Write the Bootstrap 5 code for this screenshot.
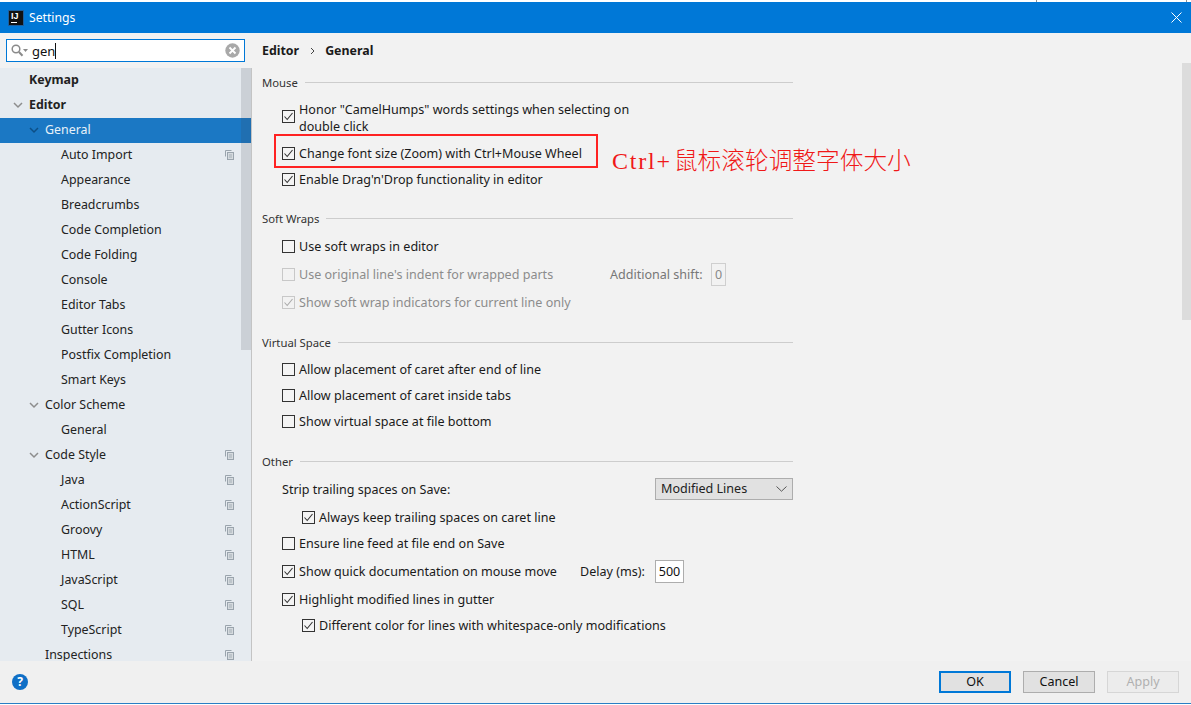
<!DOCTYPE html>
<html lang="en">
<head>
<meta charset="utf-8">
<title>Settings</title>
<link href="https://cdn.jsdelivr.net/npm/bootstrap@5.3.0/dist/css/bootstrap.min.css" rel="stylesheet">
<style>
html,body{height:705px;overflow:hidden;background:#fff}
body{font-family:"Noto Sans","Liberation Sans",sans-serif;font-size:12.55px;color:#1a1a1a;line-height:17px}
.dlg{height:705px;padding-bottom:1px}
.topstrip{height:2px;flex:none;background:linear-gradient(#8f8f8f,#8f8f8f) 1036px 0/1px 2px no-repeat,linear-gradient(#8f8f8f,#8f8f8f) 1186px 0/1px 2px no-repeat,#fff}
.titlebar{height:31px;background:#0078d7;color:#fff;padding:0 9px;flex:none;font-size:12.2px}
.ij-logo{width:14px;height:14px;background:#111;color:#fff;font:700 9px/10px "Liberation Sans",sans-serif;padding-left:2px;margin-right:6px;position:relative;flex:none;outline:1px solid #1f5f9c}
.ij-logo::after{content:"";position:absolute;left:2px;bottom:2px;width:6px;height:1px;background:#fff}
.workarea{flex:1 1 auto;min-height:0;overflow:hidden;background:#f2f2f2;position:relative}
.side{width:252px;flex:none;position:relative;overflow:hidden}
.searchwrap{height:35px;background:#f2f2f2;padding:6px 6px 0;flex:none}
.searchbox{width:239px;height:23px;background:#fff;border:1px solid #0078d7;padding:0 4px}
.searchbox input{border:0;outline:0;background:transparent;padding:0 0 0 4px;width:27px;font-size:13px;height:21px;color:#111}
.caret-mark{width:1px;height:16px;background:#111;flex:none}
.tree{list-style:none;margin:0;padding:0;flex:1 1 auto;background:#e6ebf0;border-right:1px solid #c4c4c4;font-size:12.4px}
.tnode{height:25px;display:flex;align-items:center;position:relative;white-space:nowrap;color:#222;padding-bottom:2px}
.lv0{padding-left:29px}.lv1{padding-left:45px}.lv2{padding-left:61px}
.tnode.sel{background:#1b78c4;color:#e8f1f8}
.chev{position:absolute;top:9px;width:10px;height:7px}
.lv0 .chev{left:13px}.lv1 .chev{left:29px}
.copyic{position:absolute;left:225px;top:7px;width:9px;height:10px}
.sidebar-thumb{position:absolute;left:241px;top:35px;width:10px;height:282px;background:rgba(60,70,80,.16)}
.main-pane{flex:1 1 auto;min-width:0;padding:8px 0 0 10px;overflow:hidden}
.crumbs{height:19px;font-weight:700;font-size:12.4px;margin-bottom:12px;display:flex;align-items:center}
.crumbs svg{margin:0 10px 0 11px}
.formcol{width:531px}
.sect{height:20px;display:flex;align-items:center;font-size:11.3px;color:#333;gap:7px}
.sect::after{content:"";flex:1 1 auto;height:1px;background:#cdcdcd}
.sect-gap{margin-top:18px}
.sect-gap.snug{margin-top:17px}
.ro{display:flex;align-items:center;height:24px;margin-top:2px;padding-left:20px;white-space:nowrap}
.ro.tall{margin-top:4px}
.ro.after-sect{margin-top:6px}
.ro.after-sect.near{margin-top:5px}
.ro.nest{padding-left:40px}
.ro.two{height:38px;margin-top:9px;align-items:flex-start;white-space:normal}
.ro.two .form-check-input{margin-top:9px}
.ro.dis{color:#8c8c8c}
.form-check-input.cb{appearance:none;width:13px;height:13px;flex:none;margin:0 4px 0 0;border:1px solid #333;border-radius:0;background-color:#f4f4f4;background-size:11px 11px;background-position:center;background-repeat:no-repeat}
.form-check-input.cb:checked{background-color:#f4f4f4;border-color:#333;background-image:url("data:image/svg+xml,%3Csvg xmlns='http://www.w3.org/2000/svg' viewBox='0 0 11 11'%3E%3Cpath d='M1.5 5.5 4.2 8.5 9.5 2' fill='none' stroke='%23333' stroke-width='1.1'/%3E%3C/svg%3E")}
.form-check-input.cb:focus{box-shadow:none}
.form-check-input.cb:disabled{opacity:1;border-color:#c8c8c8;background-color:#f2f2f2}
.form-check-input.cb:disabled:checked{border-color:#c8c8c8;background-color:#f2f2f2;background-image:url("data:image/svg+xml,%3Csvg xmlns='http://www.w3.org/2000/svg' viewBox='0 0 11 11'%3E%3Cpath d='M1.5 5.5 4.2 8.5 9.5 2' fill='none' stroke='%23aaa' stroke-width='1.1'/%3E%3C/svg%3E")}
.shift-lbl{margin-left:auto;flex:0 0 101px;color:#777}
.num-input.form-control{width:29px;height:23px;min-height:0;padding:0 2px;border:1px solid #adadad;border-radius:0;font-size:12.55px;text-align:center;background:#fff;color:#111;box-shadow:none;line-height:21px;flex:none}
.num-input.form-control:disabled{width:15px;padding:0;background:#f2f2f2;border-color:#cfcfcf;color:#888;opacity:1}
.num-input.shift-field{margin-right:67px}
.num-input.delay-field{margin-right:109px}
.delay-lbl{flex:0 0 75px}
.sel-box.form-select{width:138px;height:22px;padding:0 20px 0 5px;border:1px solid #adadad;border-radius:0;background-color:#e1e1e1;font-size:12.55px;line-height:20px;color:#222;box-shadow:none;background-position:right 5px center;background-size:11px 6px;background-image:url("data:image/svg+xml,%3Csvg xmlns='http://www.w3.org/2000/svg' viewBox='0 0 11 6'%3E%3Cpath d='M.5.5 5.5 5.2 10.500.5' fill='none' stroke='%23555'/%3E%3C/svg%3E")}
.wrap-honor{width:340px}
.redbox{position:absolute;left:274px;top:101px;width:324px;height:34px;border:2px solid #f22;pointer-events:none}
.note{position:absolute;left:612px;top:110px;color:#f01818;line-height:32px;white-space:nowrap;font-size:23.7px;font-family:"Noto Sans CJK SC",serif;font-weight:300}
.note .lat{font:24px/32px "Liberation Serif",serif;letter-spacing:1.8px;margin-right:2px}
.main-thumb{position:absolute;left:1182px;top:30px;width:9px;height:257px;background:#dcdcdc}
.foot{height:42px;background:#f0f0f0;padding:0 12px;flex:none}
.btmline{height:1px;background:#2a7fc4;flex:none}
.help{width:16px;height:16px;border-radius:50%;background:#0f6fc6;color:#fff;font-size:12px;font-weight:700;line-height:16px;text-align:center;margin-right:auto}
.btn.dlgbtn{width:72px;height:22px;padding:0;border-radius:0;background:#e1e1e1;border:1px solid #adadad;font-size:12.55px;line-height:20px;color:#111;margin-left:12px}
.btn.dlgbtn.pri{border:2px solid #0078d7;line-height:18px}
.btn.dlgbtn:disabled{background:#ececec;border-color:#d6d6d6;color:#b0b0b0;opacity:1}
</style>
</head>
<body>
<div class="dlg d-flex flex-column">
  <div class="topstrip"></div>
  <div class="titlebar d-flex align-items-center">
    <div class="ij-logo">IJ</div>
    <span>Settings</span>
    <svg class="ms-auto" width="11" height="11" viewBox="0 0 11 11"><path d="M.5.5 10.500 10.500M10.500.5.5 10.500" stroke="#fff" fill="none"/></svg>
  </div>
  <div class="workarea d-flex">
    <aside class="side d-flex flex-column">
      <div class="searchwrap">
        <div class="searchbox d-flex align-items-center">
          <svg width="17" height="13" viewBox="0 0 17 13" class="flex-none"><circle cx="5" cy="5" r="3.800" fill="none" stroke="#8a8a8a" stroke-width="1.500"/><path d="M8 8l3.500 3.800" stroke="#8a8a8a" stroke-width="2"/><path d="M12 5h5l-2.500 3z" fill="#8a8a8a"/></svg>
          <input type="text" value="gen" aria-label="Search"><span class="caret-mark"></span>
          <svg class="ms-auto" width="15" height="15" viewBox="0 0 15 15"><circle cx="7.500" cy="7.500" r="7.200" fill="#a9a9a9"/><path d="M4.500 4.500l6 6M10.500 4.500l-6 6" stroke="#fff" stroke-width="1.800"/></svg>
        </div>
      </div>
      <ul class="tree">
        <li class="tnode lv0 fw-bold">Keymap</li>
        <li class="tnode lv0 fw-bold"><svg class="chev" viewBox="0 0 10 7"><path d="M1 1l4 4 4-4" fill="none" stroke="#8d8d8d" stroke-width="1.500"/></svg>Editor</li>
        <li class="tnode lv1 sel"><svg class="chev" viewBox="0 0 10 7"><path d="M1 1l4 4 4-4" fill="none" stroke="#0d4f86" stroke-width="1.500"/></svg>General</li>
        <li class="tnode lv2">Auto Import<svg class="copyic" viewBox="0 0 9 10"><use href="#cpy"/></svg></li>
        <li class="tnode lv2">Appearance</li>
        <li class="tnode lv2">Breadcrumbs</li>
        <li class="tnode lv2">Code Completion</li>
        <li class="tnode lv2">Code Folding</li>
        <li class="tnode lv2">Console</li>
        <li class="tnode lv2">Editor Tabs</li>
        <li class="tnode lv2">Gutter Icons</li>
        <li class="tnode lv2">Postfix Completion</li>
        <li class="tnode lv2">Smart Keys</li>
        <li class="tnode lv1"><svg class="chev" viewBox="0 0 10 7"><path d="M1 1l4 4 4-4" fill="none" stroke="#8d8d8d" stroke-width="1.500"/></svg>Color Scheme</li>
        <li class="tnode lv2">General</li>
        <li class="tnode lv1"><svg class="chev" viewBox="0 0 10 7"><path d="M1 1l4 4 4-4" fill="none" stroke="#8d8d8d" stroke-width="1.500"/></svg>Code Style<svg class="copyic" viewBox="0 0 9 10"><use href="#cpy"/></svg></li>
        <li class="tnode lv2">Java<svg class="copyic" viewBox="0 0 9 10"><use href="#cpy"/></svg></li>
        <li class="tnode lv2">ActionScript<svg class="copyic" viewBox="0 0 9 10"><use href="#cpy"/></svg></li>
        <li class="tnode lv2">Groovy<svg class="copyic" viewBox="0 0 9 10"><use href="#cpy"/></svg></li>
        <li class="tnode lv2">HTML<svg class="copyic" viewBox="0 0 9 10"><use href="#cpy"/></svg></li>
        <li class="tnode lv2">JavaScript<svg class="copyic" viewBox="0 0 9 10"><use href="#cpy"/></svg></li>
        <li class="tnode lv2">SQL<svg class="copyic" viewBox="0 0 9 10"><use href="#cpy"/></svg></li>
        <li class="tnode lv2">TypeScript<svg class="copyic" viewBox="0 0 9 10"><use href="#cpy"/></svg></li>
        <li class="tnode lv1">Inspections<svg class="copyic" viewBox="0 0 9 10"><use href="#cpy"/></svg></li>
      </ul>
      <div class="sidebar-thumb"></div>
    </aside>
    <main class="main-pane">
      <div class="crumbs">Editor<svg width="5" height="8" viewBox="0 0 5 8"><path d="M1 1l3 3-3 3" fill="none" stroke="#444"/></svg>General</div>
      <div class="formcol">
        <div class="sect">Mouse</div>
        <label class="ro two"><input class="form-check-input cb" type="checkbox" checked><span class="wrap-honor">Honor "CamelHumps" words settings when selecting on double click</span></label>
        <label class="ro"><input class="form-check-input cb" type="checkbox" checked>Change font size (Zoom) with Ctrl+Mouse Wheel</label>
        <label class="ro"><input class="form-check-input cb" type="checkbox" checked>Enable Drag'n'Drop functionality in editor</label>
        <div class="sect sect-gap snug">Soft Wraps</div>
        <label class="ro after-sect"><input class="form-check-input cb" type="checkbox">Use soft wraps in editor</label>
        <div class="ro tall dis"><input class="form-check-input cb" type="checkbox" disabled>Use original line's indent for wrapped parts<span class="shift-lbl">Additional shift:</span><input class="form-control num-input shift-field" value="0" disabled aria-label="Additional shift"></div>
        <label class="ro tall dis"><input class="form-check-input cb" type="checkbox" checked disabled>Show soft wrap indicators for current line only</label>
        <div class="sect sect-gap">Virtual Space</div>
        <label class="ro after-sect near"><input class="form-check-input cb" type="checkbox">Allow placement of caret after end of line</label>
        <label class="ro"><input class="form-check-input cb" type="checkbox">Allow placement of caret inside tabs</label>
        <label class="ro"><input class="form-check-input cb" type="checkbox">Show virtual space at file bottom</label>
        <div class="sect sect-gap">Other</div>
        <div class="ro after-sect justify-content-between"><span>Strip trailing spaces on Save:</span><select class="form-select sel-box" aria-label="Strip trailing spaces"><option>Modified Lines</option></select></div>
        <label class="ro tall nest"><input class="form-check-input cb" type="checkbox" checked>Always keep trailing spaces on caret line</label>
        <label class="ro"><input class="form-check-input cb" type="checkbox">Ensure line feed at file end on Save</label>
        <div class="ro tall"><input class="form-check-input cb" type="checkbox" checked><span class="flex-grow-1">Show quick documentation on mouse move</span><span class="delay-lbl">Delay (ms):</span><input class="form-control num-input delay-field" value="500" aria-label="Delay"></div>
        <label class="ro tall"><input class="form-check-input cb" type="checkbox" checked>Highlight modified lines in gutter</label>
        <label class="ro nest"><input class="form-check-input cb" type="checkbox" checked>Different color for lines with whitespace-only modifications</label>
        <div class="sect sect-gap snug">Additional</div>
      </div>
    </main>
    <div class="main-thumb"></div>
    <div class="redbox"></div>
    <div class="note"><span class="lat">Ctrl+</span>鼠标滚轮调整字体大小</div>
  </div>
  <footer class="foot d-flex align-items-center">
    <div class="help">?</div>
    <button class="btn dlgbtn pri" type="button">OK</button>
    <button class="btn dlgbtn" type="button">Cancel</button>
    <button class="btn dlgbtn" type="button" disabled>Apply</button>
  </footer>
  <div class="btmline"></div>
</div>
<svg width="0" height="0" class="position-absolute"><defs><g id="cpy" fill="none" stroke="#9aa4ad"><path d="M.5 6.500V.5H6.500"/><rect x="2.500" y="2.500" width="6" height="7" fill="#d5dade"/><path d="M4 5h3M4 7h3" stroke-width=".8"/></g></defs></svg>
<script src="https://cdn.jsdelivr.net/npm/bootstrap@5.3.0/dist/js/bootstrap.bundle.min.js"></script>
</body>
</html>
